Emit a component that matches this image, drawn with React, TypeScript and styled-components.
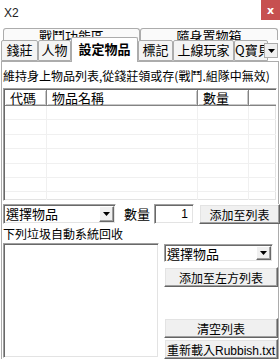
import React from "react"
import styled, { createGlobalStyle } from "styled-components"

const GlobalStyle = createGlobalStyle`
  html, body { margin: 0; padding: 0; background: #fff; }
  body {
    font-family: "Noto Sans CJK TC", "Liberation Sans", sans-serif;
    font-size: 12px;
    color: #000;
  }
`

const Window = styled.div`
  width: 280px;
  height: 359px;
  display: flex;
  flex-direction: column;
  background: #fff;
  overflow: hidden;
`

const TitleBar = styled.div`
  height: 28px;
  flex-shrink: 0;
  display: flex;
  justify-content: space-between;
  align-items: flex-start;
`

const Title = styled.span`
  font-family: "Liberation Sans", sans-serif;
  font-size: 12px;
  line-height: 14px;
  color: #222;
  margin: 6px 0 0 4px;
`

const CloseButton = styled.div`
  width: 19px;
  height: 20px;
  background: #c75050;
  color: #fff;
  display: flex;
  align-items: center;
  justify-content: center;
  font: bold 11px "DejaVu Sans", sans-serif;
`

const TabArea = styled.div`
  position: relative;
  flex-shrink: 0;
  display: flex;
  flex-direction: column;
`

const BackRow = styled.div`
  display: flex;
  padding-left: 3px;
  height: 12px;
`

const BackTab = styled.div<{ $w: number }>`
  width: ${p => p.$w}px;
  box-sizing: border-box;
  height: 12px;
  overflow: hidden;
  border: 1px solid #acacac;
  border-bottom: none;
  border-radius: 3px 3px 0 0;
  background: #fafafa;
  text-align: center;
  line-height: 14px;
  font-size: 13px;
`

const FrontRow = styled.div`
  display: flex;
  align-items: flex-end;
  height: 21px;
  padding-left: 1px;
`

const FrontTab = styled.div<{ $w: number; $active?: boolean }>`
  position: relative;
  width: ${p => p.$w}px;
  box-sizing: border-box;
  height: ${p => (p.$active ? 25 : 21)}px;
  margin-bottom: ${p => (p.$active ? -1 : 0)}px;
  z-index: ${p => (p.$active ? 2 : 1)};
  border: 1px solid #acacac;
  border-bottom: ${p => (p.$active ? "none" : "1px solid #acacac")};
  border-radius: 2px 2px 0 0;
  background: ${p => (p.$active ? "#fff" : "#f4f4f4")};
  font-weight: ${p => (p.$active ? "bold" : "normal")};
  white-space: nowrap;
  overflow: hidden;
  text-align: center;
  line-height: 18px;
  padding-top: ${p => (p.$active ? 2 : 0)}px;
  font-size: 13px;
`

const ScrollTabs = styled.div`
  position: absolute;
  right: 2px;
  top: 15px;
  width: 14px;
  height: 15px;
  box-sizing: border-box;
  background: #f0f0f0;
  border: 1px solid #acacac;
  z-index: 3;
  display: flex;
  align-items: center;
  justify-content: center;
`

const Panel = styled.div`
  flex: 1;
  margin: 0 1px;
  border: 1px solid #acacac;
  border-bottom: none;
  background: #fff;
  display: flex;
  flex-direction: column;
  padding: 0 1px;
`

const Caption = styled.div<{ $top: number }>`
  line-height: 16px;
  margin-top: ${p => p.$top}px;
  white-space: nowrap;
`

const Sunken = styled.div`
  box-sizing: border-box;
  border: 1px solid;
  border-color: #a0a0a0 #fff #fff #a0a0a0;
  box-shadow: inset 1px 1px #696969, inset -1px -1px #e3e3e3;
  padding: 1px;
  background: #fff;
  flex-shrink: 0;
`

const ListView = styled(Sunken)`
  margin-top: 4px;
  height: 113px;
  overflow: hidden;
`

const HeaderRow = styled.div`
  display: flex;
  height: 16px;
`

const HeaderCell = styled.div<{ $w: number }>`
  box-sizing: border-box;
  width: ${p => p.$w}px;
  flex-shrink: 0;
  background: #fff;
  border-right: 1px solid #838383;
  border-bottom: 1px solid #838383;
  box-shadow: inset 1px 1px #fff, inset -1px -1px #c8c8c8;
  padding-left: 5px;
  line-height: 15px;
  font-size: 13px;
`

const Row = styled.div`
  display: flex;
  height: 14.4px;
`

const Cell = styled.div<{ $w: number }>`
  box-sizing: border-box;
  width: ${p => p.$w}px;
  flex-shrink: 0;
  border-right: 1px solid #f0f0f0;
  border-bottom: 1px solid #f0f0f0;
`

const ControlRow = styled.div`
  display: flex;
  align-items: center;
  margin-top: 3px;
  height: 20px;
  gap: 5px;
`

const Combo = styled(Sunken)<{ $w: number; $h: number }>`
  width: ${p => p.$w}px;
  height: ${p => p.$h}px;
  display: flex;
  align-items: stretch;
  padding: 1px 1px 1px 2px;
`

const ComboText = styled.span`
  flex: 1;
  line-height: 16px;
  font-size: 13px;
  white-space: nowrap;
`

const ComboArrow = styled.div`
  width: 15px;
  box-sizing: border-box;
  background: #f0f0f0;
  border: 1px solid;
  border-color: #fff #696969 #696969 #fff;
  box-shadow: inset -1px -1px #a0a0a0;
  display: flex;
  align-items: center;
  justify-content: center;
`

const Label = styled.span`
  margin: 0 -1px 0 3px;
  font-size: 13px;
  line-height: 16px;
  white-space: nowrap;
  flex-shrink: 0;
`

const NumberBox = styled(Sunken)`
  width: 40px;
  height: 20px;
  text-align: right;
  padding: 1px 5px 0 0;
  line-height: 16px;
  font-family: "Liberation Sans", sans-serif;
  font-size: 12px;
`

const Button = styled.div<{ $w: number }>`
  width: ${p => p.$w}px;
  height: 20px;
  flex-shrink: 0;
  box-sizing: border-box;
  background: #f0f0f0;
  border: 1px solid;
  border-color: #fff #646464 #646464 #fff;
  box-shadow: inset -1px -1px #a0a0a0, inset 1px 1px #e3e3e3;
  display: flex;
  align-items: center;
  justify-content: center;
  font-family: "Liberation Sans", "Noto Sans CJK TC", sans-serif;
  font-size: 12px;
  white-space: nowrap;
  overflow: hidden;
`

const BottomArea = styled.div`
  display: flex;
  margin-top: 1px;
  flex: 1;
  gap: 5px;
`

const RecycleList = styled(Sunken)`
  width: 156px;
  height: 115px;
`

const SideColumn = styled.div`
  display: flex;
  flex-direction: column;
  padding-top: 1px;
  gap: 1px;
  height: 115px;
`

const Spacer = styled.div`
  flex: 1;
`

const Triangle = () => (
  <svg width="7" height="4" viewBox="0 0 7 4">
    <polygon points="0,0 7,0 3.5,4" fill="#000" />
  </svg>
)

const backTabs = [
  { label: "戰鬥功能區", w: 137 },
  { label: "隨身置物箱", w: 138 },
]

const frontTabs = [
  { label: "錢莊", w: 37 },
  { label: "人物", w: 33 },
  { label: "設定物品", w: 67, active: true },
  { label: "標記", w: 35 },
  { label: "上線玩家", w: 61 },
  { label: "Q寶貝", w: 34 },
]

const columns = [
  { label: "代碼", w: 42 },
  { label: "物品名稱", w: 151 },
  { label: "數量", w: 51 },
  { label: "", w: 40 },
]

const App = () => {
  const rows = Array.from({ length: 7 })
  return (
    <Window>
      <GlobalStyle />
      <TitleBar>
        <Title>X2</Title>
        <CloseButton>x</CloseButton>
      </TitleBar>
      <TabArea>
        <BackRow>
          {backTabs.map(t => (
            <BackTab key={t.label} $w={t.w}>{t.label}</BackTab>
          ))}
        </BackRow>
        <FrontRow>
          {frontTabs.map(t => (
            <FrontTab key={t.label} $w={t.w} $active={t.active}>{t.label}</FrontTab>
          ))}
        </FrontRow>
        <ScrollTabs><Triangle /></ScrollTabs>
      </TabArea>
      <Panel>
        <Caption $top={6}>維持身上物品列表,從錢莊領或存(戰鬥.組隊中無效)</Caption>
        <ListView>
          <HeaderRow>
            {columns.map((c, i) => (
              <HeaderCell key={i} $w={c.w}>{c.label}</HeaderCell>
            ))}
          </HeaderRow>
          {rows.map((_, r) => (
            <Row key={r}>
              {columns.map((c, i) => (
                <Cell key={i} $w={c.w} />
              ))}
            </Row>
          ))}
        </ListView>
        <ControlRow>
          <Combo $w={113} $h={20}>
            <ComboText>選擇物品</ComboText>
            <ComboArrow><Triangle /></ComboArrow>
          </Combo>
          <Label>數量</Label>
          <NumberBox>1</NumberBox>
          <Button $w={81}>添加至列表</Button>
        </ControlRow>
        <Caption $top={2}>下列垃圾自動系統回收</Caption>
        <BottomArea>
          <RecycleList />
          <SideColumn>
            <Combo $w={109} $h={18}>
              <ComboText>選擇物品</ComboText>
              <ComboArrow><Triangle /></ComboArrow>
            </Combo>
            <Button $w={114} style={{ marginTop: 4 }}>添加至左方列表</Button>
            <Spacer />
            <Button $w={114}>清空列表</Button>
            <Button $w={114}>重新載入Rubbish.txt</Button>
          </SideColumn>
        </BottomArea>
      </Panel>
    </Window>
  )
}

export default App
